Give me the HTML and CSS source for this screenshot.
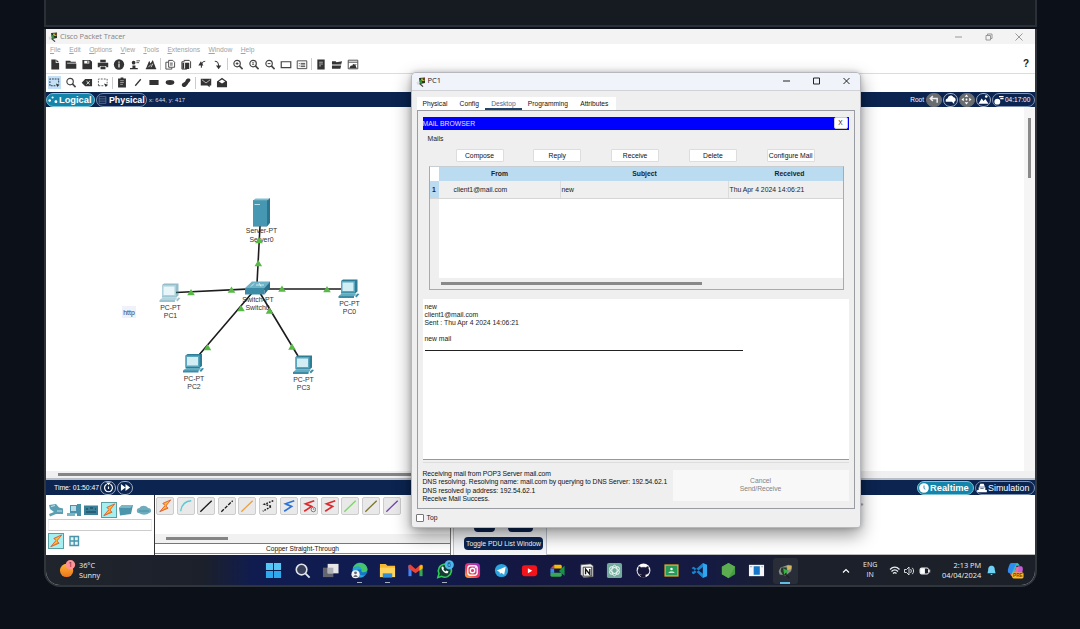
FILE: index.html
```html
<!DOCTYPE html>
<html lang="en">
<head>
<meta charset="utf-8">
<title>Cisco Packet Tracer</title>
<link rel="stylesheet" href="styles.css">
</head>
<body>
<svg class="defs" width="0" height="0">
  <defs>
    <symbol id="app" viewBox="0 0 10 10"><path d="M3 1l6-.6V6L4 7z" fill="#23391f"/><path d="M5 1.5h3.5v2.5H5z" fill="#b8a83c"/><path d="M3.2 3h2.6l.4 3-2 1z" fill="#2f8f3a"/><path d="M.5 5.500l2-1.500.6 3.200-1.800.5z" fill="#d8dcd8"/><path d="M3.500 6.500l3.600 3.200" stroke="#444" stroke-width="1.100"/><path d="M7 1h1.800v2H7z" fill="#7d2f23"/></symbol>
    <symbol id="zoom" viewBox="0 0 12 12"><circle cx="5" cy="5" r="3.500" fill="none" stroke="#444" stroke-width="1.300"/><path d="M7.500 7.500l3.500 3.500" stroke="#444" stroke-width="1.700"/></symbol>
    <symbol id="pc" viewBox="0 0 22 20"><path d="M3 2l2-1.500h14.500v12L17 14.500H3z" fill="#2e7d97"/><path d="M3 2h14v11.500H3z" fill="#5ba6bd"/><path d="M4.500 3.500h11v8.500h-11z" fill="#d3edf4"/><path d="M1 16.500l3-2h14.500L16 17.500H1z" fill="#65abc0"/><path d="M.5 17h15.500v2H.5zM17 17l2.500-2.500 2 .5-3 3.500z" fill="#3d8ca5"/></symbol>
    <symbol id="bolt" viewBox="0 0 16 16"><path d="M14.500 1L5.500 5l2.500 2.500-6 7L11.500 10.500 9 8z" fill="#f79a1e" stroke="#d8502b" stroke-width=".9"/><path d="M13 2.500L7 5.500 9.500 7.500 4 12.500l6-3-2-1.700z" fill="#ffc33d"/></symbol>
    <symbol id="zig" viewBox="0 0 16 16"><path d="M14 2L4 5.500 11 8.500 2.500 14M4.500 6l6.500 2.500" fill="none" stroke="currentColor" stroke-width="1.900"/></symbol>
  </defs>
</svg>

<div class="card-above"></div>
<main class="shot">
  <header class="titlebar">
    <svg class="app-ico"><use href="#app"/></svg><span class="app-title">Cisco Packet Tracer</span>
    <svg class="winctl" viewBox="0 0 74 12" fill="none" stroke="#8f8f8f" stroke-width=".9"><path d="M1 6h7M32 4.500h4.500v4.500H32zM33.500 4V3h4.500v4.500h-1M61.500 2.500l7 7M68.500 2.500l-7 7"/></svg>
  </header>
  <nav class="menu"><span><u>F</u>ile</span><span><u>E</u>dit</span><span><u>O</u>ptions</span><span><u>V</u>iew</span><span><u>T</u>ools</span><span><u>E</u>xtensions</span><span><u>W</u>indow</span><span><u>H</u>elp</span></nav>

  <div class="tools first">
    <svg viewBox="0 0 12 12"><path d="M2 .5h4.800v3.800H10.500V11.500H2zM7.500.5l3 3.100h-3z"/></svg>
    <svg viewBox="0 0 12 12"><path d="M.2 1.800h4.800l1 1.200h5.300V4H1.800v1h10v5.700H.2z"/></svg>
    <svg viewBox="0 0 12 12"><path fill-rule="evenodd" d="M1 1h8.500l2 2v8.300H1zM3 2v3h5.500V2zM6.500 2.300h1v2h-1z"/></svg>
    <svg viewBox="0 0 12 12"><path d="M3 .8h6v2.700H3zM.3 4h11.400v5H9.500V7.500h-7V9H.3zM3.300 8.300h5.400V11.300H3.300z"/></svg>
    <svg viewBox="0 0 12 12"><circle cx="6" cy="6" r="5.600"/><path d="M6 5v4.200M6 2.800v1.300" stroke="#fff" stroke-width="1.300" fill="none"/></svg>
    <svg viewBox="0 0 12 12"><circle cx="4.500" cy="4" r="2"/><path d="M.5 11.300v-1.500h2.700V7h3.300v2.800H9v1.500z"/><path d="M7.500 2h4M7.500 4h3" stroke="#333" stroke-width=".9"/></svg>
    <svg viewBox="0 0 12 12"><path d="M.5 10.500L4 2l1.500 3L8 1l3.500 9.500zM.3 10h11.400v1.300H.3z"/><path d="M3 9l3-3M6 9l2-4" stroke="#fff" stroke-width=".8"/></svg>
    <i></i>
    <svg viewBox="0 0 12 12"><path d="M4.500 1.500H9l2 2V9H4.500zM4 3.500H1.500V11H8V9.500M6 4.500h3M6 6.500h3" fill="none" stroke="#444"/></svg>
    <svg viewBox="0 0 12 12"><path d="M3.500 1.500H9.500l1.500 1.500V10M4.500 3H1.500v8H7" fill="none" stroke="#333"/><path d="M5 4h4.500v7H5zM2 4h2v6.500H2z"/></svg>
    <svg viewBox="0 0 12 12"><path d="M9.500 2.500C6.500 2.500 5.300 4.500 5.300 9.500" fill="none" stroke="#444" stroke-width="1.200"/><path d="M2.500 6.500h5.500L5.300 2z" transform="translate(-.5 .5)"/></svg>
    <svg viewBox="0 0 12 12"><path d="M2.500 2.500C5.500 2.500 6.700 4 6.700 8" fill="none" stroke="#444" stroke-width="1.200"/><path d="M3.800 7h5.800L6.700 11.300z"/></svg>
    <i></i>
    <svg viewBox="0 0 12 12"><use href="#zoom"/><path d="M3.500 5h3M5 3.500v3" stroke="#333"/></svg>
    <svg viewBox="0 0 12 12"><use href="#zoom"/><path d="M3.800 4h2.400M3.800 6h2.400M5 3.500v3" stroke="#666" stroke-width=".8"/></svg>
    <svg viewBox="0 0 12 12"><use href="#zoom"/><path d="M3.500 5h3" stroke="#333"/></svg>
    <svg viewBox="0 0 12 12"><path d="M.8 3h10.400v6.500H.8z" fill="none" stroke="#444" stroke-width="1.300"/></svg>
    <svg viewBox="0 0 12 12"><path d="M.8 2h10.400v8.500H.8zM2.500 5h1M2.500 7.500h1M4.500 4.800h5M4.500 6.500h5M4.500 8.300h5" fill="none" stroke="#444"/></svg>
    <i></i>
    <svg viewBox="0 0 12 12"><path d="M2 .5h8v11H2z"/><path d="M4 3.500h4M4 5.500h4M4 7.500h2" stroke="#bbb"/></svg>
    <svg viewBox="0 0 12 12"><path d="M.5 2.500h4l1 1 6-1-1 3.500H.5zM.5 7h10l-.8 3.500H.5z"/><path d="M1 6.500l9-.8" stroke="#999" stroke-width=".8"/></svg>
    <svg viewBox="0 0 12 12"><path d="M.8 1.300h10.400v9.400H.8zM1 3.500h10" fill="none" stroke="#444"/><path d="M2 10c1-3 2-3.500 3-2.500 1-3 3-3.500 5 2.500z"/><path d="M7.500 8l2-2.500" stroke="#444"/></svg>
    <b class="help">?</b>
  </div>
  <div class="tools second">
    <svg class="on" viewBox="0 0 12 12"><path d="M1 3v-.8h9.500V7M1 4.500v5h6.500" fill="none" stroke="#345" stroke-width="1.200" stroke-dasharray="2 1"/><path d="M7.500 7l4 1.500L9 11z"/></svg>
    <svg viewBox="0 0 12 12"><use href="#zoom"/></svg>
    <svg viewBox="0 0 12 12"><path d="M.2 6.200L4 2.200h7.500v8H4z"/><path d="M5.500 4.500l3.500 3.500M9 4.500L5.500 8" stroke="#fff"/></svg>
    <svg viewBox="0 0 12 12"><path d="M1 9.500V2.200h9.500V7M1 9.500h6" fill="none" stroke="#555" stroke-dasharray="2 1.300"/><path d="M7 7l4.500 1.500L9 11z"/></svg>
    <i></i>
    <svg viewBox="0 0 12 12"><path d="M2 1.500h2.500V.5h3v1H10.300v10H1.700v-10z"/><path d="M4 4h4M4 6h4M4 8h3" stroke="#aaa" stroke-width=".9"/></svg>
    <svg viewBox="0 0 12 12"><path d="M3 9.500L9 2.500" stroke="#333" stroke-width="1.400"/></svg>
    <svg viewBox="0 0 12 12"><path d="M1 3.300h10v5.400H1z"/></svg>
    <svg viewBox="0 0 12 12"><ellipse cx="6" cy="6" rx="4.700" ry="2.600"/></svg>
    <svg viewBox="0 0 12 12"><path d="M6 3c1-2 4.500-2 4.800 0S9 5.500 8 7.500 4.500 12 2.500 10.500 1.500 7 3.500 6 5 5 6 3z"/></svg>
    <i></i>
    <svg viewBox="0 0 12 12"><path d="M.3 1.800h11.400v7.500H10v2L7.500 9.300H.3z"/><path d="M1.500 3L6 6.500 10.500 3" stroke="#ccc" fill="none" stroke-width=".9"/></svg>
    <svg viewBox="0 0 12 12"><path d="M.5 5L6 .8 11.500 5v6.300H.5z"/><path d="M2.500 5L6 2.800 9.500 5 6 7.200z" fill="#fff"/></svg>
  </div>

  <div class="navy">
    <span class="pill logical on"><svg viewBox="0 0 12 12"><circle cx="2" cy="6.500" r="1.500"/><circle cx="5.500" cy="3" r="1.300"/><circle cx="9.500" cy="8" r="1.700"/></svg>Logical</span>
    <span class="pill physical"><svg viewBox="0 0 12 12"><path d="M1.500 1.500h9v9h-9zM1.500 4.500h9M1.500 7.500h9" fill="none" stroke="#74849f" stroke-width=".9"/></svg>Physical</span>
    <span class="xy">x: 644, y: 417</span>
    <span class="root">Root</span>
    <span class="round grey"><svg viewBox="0 0 12 12"><path d="M10 9.500V5H3M5.300 2.300L2.500 5l2.800 2.700" fill="none" stroke="#eee" stroke-width="1.600"/></svg></span>
    <span class="round"><svg viewBox="0 0 12 12"><path d="M1 8.500C0 5.500 2 5 3 4.500 3.500 1 8 .5 9.300 3.500c3 .5 3 4.500.7 5v2.500L7.500 8.500z"/></svg></span>
    <span class="round grey"><svg viewBox="0 0 12 12"><path d="M6 .5l2 2.500H4zM6 11.500l2-2.500H4zM.5 6L3 4v4zM11.500 6L9 4v4z"/><circle cx="6" cy="6" r="1"/></svg></span>
    <span class="round"><svg viewBox="0 0 12 12"><path d="M.5 10.500l3.500-5.500 2 2.500L8 5.500l3.500 5z"/><circle cx="9" cy="2.800" r="1.400"/></svg></span>
    <span class="pill clock"><svg viewBox="0 0 12 12"><circle cx="4" cy="8" r="3.500"/><path d="M6 2h5.500M7.500 4.300h4" stroke="#fff" stroke-width="1.400"/></svg>04:17:00</span>
  </div>

  <section class="canvas">
    <svg class="topology" viewBox="46 107 370 364" width="370" height="364">
      <path d="M122 306h14v12h-14z" fill="#f1f1fa"/>
      <g class="labels">
        <text x="129" y="314.500">http</text>
        <text x="261.500" y="233">Server-PT</text><text x="261.500" y="241.500">Server0</text>
        <text x="258" y="301.500">Switch-PT</text><text x="257.500" y="310">Switch0</text>
        <text x="170.500" y="310">PC-PT</text><text x="170.500" y="318">PC1</text>
        <text x="349.500" y="306">PC-PT</text><text x="349.500" y="314">PC0</text>
        <text x="194" y="380.500">PC-PT</text><text x="194" y="388.500">PC2</text>
        <text x="303.500" y="382">PC-PT</text><text x="303.500" y="390">PC3</text>
      </g>
      <g stroke="#1c1c1c" stroke-width="1.600"><path d="M260 226L257 284M176 292.500L258 288.500M256 289H342M252 293L199 355M260 293L298 356"/></g>
      <path d="M253 200h14l3-2v25l-3 3.500h-14z" fill="#2c7590"/><path d="M253 200.500h14V226h-14z" fill="#4597b2"/><path d="M253 200.500l2.500-2H270l-3 2z" fill="#7dbdcf"/><path d="M254.500 204.500h5.500" stroke="#b9e0ea"/>
      <path d="M245 288l7-6.500h18l-5.500 7z" fill="#6db2c6"/><path d="M245 288h19.500v6.500H245z" fill="#3b8ba6"/><path d="M264.500 288l5.500-6.500v6l-5.500 7z" fill="#2a718b"/><path d="M251 286.500l3-3M256 285h8M259 283l2 3.500" stroke="#d9f0f5" stroke-width=".9"/>
      <use href="#pc" x="159" y="283" width="22" height="20" opacity=".5"/>
      <use href="#pc" x="338" y="279" width="22" height="20"/>
      <use href="#pc" x="182.500" y="353.500" width="22" height="20"/>
      <use href="#pc" x="292.500" y="355" width="22" height="20"/>
      <path fill="#58b947" d="M259 237l3.800 6.200h-7.600zM258.300 260l3.800 6.200h-7.600zM191 289l3.800 6.200h-7.600zM231.500 286.500l3.800 6.200h-7.600zM282 285.500l3.800 6.200h-7.600zM327 286l3.800 6.200h-7.600zM241 305l3.800 6.200h-7.600zM269.500 307.500l3.800 6.200h-7.600zM207.500 344l3.800 6.200h-7.600zM292 343.500l3.800 6.200h-7.600z"/>
    </svg>
    <div class="vscroll"><i></i></div>
  </section>
  <div class="hscroll"><i></i></div>

  <div class="navy lower">
    <span class="time">Time: 01:50:47</span>
    <span class="round"><svg viewBox="0 0 12 12"><path d="M4 2.500a4.300 4.300 0 1 0 4 0M6 5v2.500" fill="none" stroke="#fff" stroke-width="1.300"/><path d="M3.500.5h5L6 3.500z"/></svg></span>
    <span class="round"><svg viewBox="0 0 12 12"><path d="M1 2.300L6 6 1 9.700zM6 2.300L11 6 6 9.700z"/></svg></span>
    <span class="pill realtime on"><svg viewBox="0 0 12 12"><circle cx="6" cy="6" r="5.800"/><path d="M6 3v3.500l1.500 1" stroke="#1384aa" fill="none"/></svg>Realtime</span>
    <span class="pill sim"><svg viewBox="0 0 12 12"><path d="M4 .8h4L9.500 4.500h-7zM2 5h8v3.500H2zM.2 8.500h11.600V11H.2z"/><path d="M4 6.500h4" stroke="#0b2450" stroke-width=".8"/></svg>Simulation</span>
  </div>

  <section class="bottom">
    <div class="kinds">
      <div class="krow">
        <svg viewBox="0 0 16 16"><path d="M1 3l7-1 3 3.500 4 1V12H8l-6 2.500-1-2.500 5-2-4-3z" fill="#5b9fb3"/><path d="M3 4.500l4-1M9 9h5" stroke="#c5e3eb"/></svg>
        <svg viewBox="0 0 16 16"><path d="M4 3h8v8.500H4zM11 2h4v12h-4z" fill="#4b93aa"/><path d="M5 4h5v5H5z" fill="#b9dde7"/><path d="M1 11l8 0v3H1z" fill="#7ab5c6"/></svg>
        <svg viewBox="0 0 16 16"><path d="M1 3.500h14v9.500H1z" fill="#3a8099"/><path d="M3 7h2M7 6h3M12 7h1M3 10h10" stroke="#163f50"/></svg>
        <span class="tile"><svg><use href="#bolt"/></svg></span>
        <svg viewBox="0 0 16 16"><path d="M1 6l3-3h11l-2 9-11 1.500z" fill="#4b94aa"/><path d="M4 3h11l-2.500 3H1z" fill="#79b7c8"/></svg>
        <svg viewBox="0 0 16 16"><path d="M3 11C0 11 0 6 3.500 6 5 3 10 3 12 6c4 0 4 5 1 5-2 2-7 2.500-10 0z" fill="#6eabbd"/><path d="M3 9h10" stroke="#478da3"/></svg>
      </div>
      <div class="slot"></div>
      <div class="krow"><span class="tile"><svg><use href="#bolt"/></svg></span>
        <svg viewBox="0 0 16 16"><path d="M4 3.500h8.500v9H4zM8.200 3.500v9M4 8h8.500" fill="#e4f5fa" stroke="#4b94aa" stroke-width="1.400"/></svg></div>
    </div>
    <div class="cables">
      <div class="cabletiles">
        <svg viewBox="0 0 16 16"><use href="#bolt"/></svg>
        <svg viewBox="0 0 16 16"><path d="M2 14C3 6 7 2.500 14 2" fill="none" stroke="#57cbd5" stroke-width="1.500"/></svg>
        <svg viewBox="0 0 16 16"><path d="M1.500 14.500L14.500 2" stroke="#161616" stroke-width="1.500"/></svg>
        <svg viewBox="0 0 16 16"><path d="M1.500 14.500L14.500 2" stroke="#161616" stroke-width="1.500" stroke-dasharray="4 1.500"/></svg>
        <svg viewBox="0 0 16 16"><path d="M1.500 14.500L14.500 2" stroke="#eea03b" stroke-width="1.500"/></svg>
        <svg viewBox="0 0 16 16"><path d="M14 2L4 6l8 2.500L2 14" fill="none" stroke="#161616" stroke-width="1.600" stroke-dasharray="2 1.300"/></svg>
        <svg viewBox="0 0 16 16" color="#2f72d8"><use href="#zig"/></svg>
        <svg viewBox="0 0 16 16" color="#dd2a2e"><use href="#zig"/><circle cx="13" cy="12" r="2.600" fill="#eee" stroke="#555" stroke-width=".8"/><path d="M13 10.500V12h1" stroke="#555" fill="none" stroke-width=".7"/></svg>
        <svg viewBox="0 0 16 16" color="#dd2a2e"><use href="#zig"/></svg>
        <svg viewBox="0 0 16 16"><path d="M1.500 14.500L14.500 2" stroke="#74dc5c" stroke-width="1.500"/></svg>
        <svg viewBox="0 0 16 16"><path d="M1.500 14.500L14.500 2" stroke="#7d7428" stroke-width="1.500"/></svg>
        <svg viewBox="0 0 16 16"><path d="M1.500 14.500L14.500 2" stroke="#7044ad" stroke-width="1.500"/></svg>
      </div>
      <div class="cscroll"><i></i></div>
      <div class="cname">Copper Straight-Through</div>
    </div>
    <div class="pdu">
      <div class="pdu-top"><span>New</span><span>Delete</span></div>
      <span class="toggle">Toggle PDU List Window</span>
    </div>
    <div class="events">e</div>
  </section>

  <footer class="taskbar">
    <div class="weather">
      <svg viewBox="0 0 20 20"><defs><linearGradient id="sun" x2="0" y2="1"><stop stop-color="#ffb52e"/><stop offset="1" stop-color="#ee7420"/></linearGradient></defs><circle cx="8" cy="11" r="7" fill="url(#sun)"/><circle cx="12" cy="5" r="5" fill="#ff9296"/><text x="12" y="7.800" class="badge">1</text></svg>
      <div><p>36°C</p><p>Sunny</p></div>
    </div>
    <div class="apps">
      <svg viewBox="0 0 18 18"><g fill="#54c5f5"><path d="M1 1h7.500v7.500H1zM9.500 1H17v7.500H9.500z"/><path d="M1 9.500h7.500V17H1zM9.500 9.500H17V17H9.500z" fill="#2fa9ee"/></g></svg>
      <svg viewBox="0 0 18 18"><circle cx="8" cy="8" r="5.600" fill="#39405a" stroke="#e3e5ec" stroke-width="1.700"/><path d="M12 12l4.500 4.500" stroke="#e3e5ec" stroke-width="2"/></svg>
      <svg viewBox="0 0 18 18"><path d="M1 6h11v10H1z" fill="#63666f"/><path d="M6 2h11.500v10H6z" fill="#e6e6e6"/><path d="M6 6h6v6H6z" fill="#adafb4"/></svg>
      <svg class="run" viewBox="0 0 18 18"><circle cx="9.500" cy="8.500" r="8" fill="#1677c9"/><path d="M2 7C4-1 16-1 17.500 7.500c0 4-5 4-6.500 2.500C12 6 7 3 2 7z" fill="#46c66b"/><path d="M2 7c5-4 9-2 9 1H7c-1 4 3 7 8 6-5 5-14 2-13-7z" fill="#25a6dd"/><circle cx="4.800" cy="13" r="4.300" fill="#f2f3f5"/><circle cx="4.800" cy="11.500" r="1.500" fill="#667"/><path d="M2.500 16c.5-3 4-3 4.600 0z" fill="#667"/></svg>
      <svg class="run" viewBox="0 0 18 18"><path d="M1 2h6l2 2h8v12H1z" fill="#f4b92e"/><path d="M1 6h16v10H1z" fill="#ffd45e"/><path d="M4 12h10v4.500H4z" fill="#2d8edb"/></svg>
      <svg viewBox="0 0 18 18"><path d="M1.500 4h3.300v11H1.500z" fill="#4285f4"/><path d="M13.200 4h3.300v11h-3.300z" fill="#34a853"/><path d="M1.500 3.500l2-.8L9 7.500l5.500-4.800 2 .8v3L9 12 1.500 6.500z" fill="#ea4335"/><path d="M13.200 4.200l2.300-1.200 1 .8v3l-3.300 2.500z" fill="#fbbc04"/></svg>
      <svg class="run" viewBox="0 0 18 18"><path d="M2 16.500l1.200-4.300A6.900 6.900 0 1 1 6 15.200z" fill="#153c30" stroke="#30c95b" stroke-width="1.700"/><path d="M6 5c-1 3 3 7.500 6.300 7l1-2-2.300-1-1 1C8.500 9.200 8 8 7.800 7.500l.7-1L7.500 4.700z" fill="#fff"/><circle cx="14" cy="3" r="4.900" fill="#4cb9e8"/><text x="14" y="5.600" class="badge dark">6</text></svg>
      <svg viewBox="0 0 18 18"><defs><linearGradient id="ig" x1="0" y1="1" x2=".8" y2="0"><stop stop-color="#fdb83c"/><stop offset=".45" stop-color="#ed3659"/><stop offset="1" stop-color="#a334cb"/></linearGradient></defs><rect x="1" y="1" width="16" height="16" rx="4" fill="url(#ig)"/><rect x="4" y="4" width="10" height="10" rx="3" fill="none" stroke="#fff" stroke-width="1.400"/><circle cx="9" cy="9" r="2.400" fill="none" stroke="#fff" stroke-width="1.400"/><circle cx="12" cy="6" r=".7" fill="#fff"/></svg>
      <svg viewBox="0 0 18 18"><circle cx="9" cy="9" r="7" fill="#2ba3de"/><path d="M4 9l9.500-4-1.700 8.500-3-2.200-1.500 1.500-.3-2.300z" fill="#fff"/></svg>
      <svg viewBox="0 0 18 18"><rect x="1" y="3.500" width="16" height="11.500" rx="3" fill="#f3141b"/><path d="M7.300 6.500v5.500l4.600-2.700z" fill="#fff"/></svg>
      <svg viewBox="0 0 18 18"><path d="M1.500 7L5.500 3v4z" fill="#e94335"/><path d="M5.500 3H12q1.500 0 1.500 1.500V7h-8z" fill="#fbbc04"/><path d="M1.500 7h4v4.500h-4z" fill="#3c85f2"/><path d="M1.500 11.500h12V14q0 1.500-1.500 1.500H3q-1.500 0-1.500-1.500z" fill="#34a853"/><path d="M11 9l5.500-5v10.500L11 10z" fill="#159447"/></svg>
      <svg viewBox="0 0 18 18"><path d="M3 3l10-1 3 2v11.500L6 16.500 3 13z" fill="#f4f4f4" stroke="#555" stroke-width=".7"/><path d="M5.500 5.500h9v9.500h-9z" fill="#fff" stroke="#222" stroke-width=".9"/><path d="M8 13V7.500l4.500 5.500V7.500" fill="none" stroke="#111" stroke-width="1.400"/></svg>
      <svg viewBox="0 0 18 18"><rect x="1" y="1" width="16" height="16" rx="2" fill="#74aa9c"/><g fill="none" stroke="#e8f5f1" stroke-width="1"><ellipse cx="9" cy="9" rx="2.800" ry="5.600"/><ellipse cx="9" cy="9" rx="2.800" ry="5.600" transform="rotate(60 9 9)"/><ellipse cx="9" cy="9" rx="2.800" ry="5.600" transform="rotate(120 9 9)"/></g></svg>
      <svg viewBox="0 0 18 18"><circle cx="9" cy="9" r="7.300" fill="#fff"/><path d="M7 16.500v-2.800c-3 .4-3-1.500-4-1.900M7 13.500c-5-.5-4.500-5-3.200-6.300-.3-1-.1-2 .2-2.500 1 0 1.900.6 2.600 1.100 1.400-.4 3.400-.4 4.800 0 .7-.5 1.600-1.100 2.600-1.100.3.500.5 1.500.2 2.500 1.300 1.300 1.800 5.800-3.200 6.300v3H7z" fill="#18193a" stroke="#18193a" stroke-width=".3"/></svg>
      <svg viewBox="0 0 18 18"><path d="M1.500 2.500h15v13h-15z" fill="#d8a92a"/><path d="M3 4h12v10H3z" fill="#259b56"/><circle cx="9" cy="7.500" r="1.300" fill="#fff"/><path d="M5.500 11.500c1-2 6-2 7 0z" fill="#fff"/></svg>
      <svg viewBox="0 0 18 18"><path d="M12.500 1L17 3v12l-4.500 2z" fill="#2fa6ef"/><path d="M12.500 1L2 10.500l-1-1v2.300l1.800 1.300L13 5zM12.500 17L2 7 1 7.800V6l1.800-1L13 12.800z" fill="#1785cf"/></svg>
      <svg viewBox="0 0 18 18"><path d="M9 1l7 4v8l-7 4.200L2 13V5z" fill="#469b45"/><path d="M9 1l7 4-7 12-7-4V5z" fill="#5cac50"/></svg>
      <svg viewBox="0 0 18 18"><path d="M1 3h16v12H1z" fill="#f4f6f8"/><path d="M6 4.500h6.500v9H6z" fill="#1676c9"/><path d="M2 5h2.500M14 5h2" stroke="#789" stroke-width=".7"/></svg>
      <span class="active"><svg viewBox="0 0 18 18"><path d="M4 5l9-3 4 1-1 6-6 5-7-1-1-4z" fill="#8a918b"/><path d="M5 5h6v7l-4 2-3-5z" fill="#233b28"/><path d="M7 6l6 3-5 4z" fill="#34b43f"/><path d="M11 3h5v4l-4 1z" fill="#d2b65e"/><path d="M9 12l5 5" stroke="#222" stroke-width="1.500"/></svg></span>
    </div>
    <div class="tray">
      <svg class="chev" viewBox="0 0 10 10"><path d="M2 6.500l3-3 3 3" fill="none" stroke="#fff" stroke-width="1.200"/></svg>
      <div class="lang"><p>ENG</p><p>IN</p></div>
      <svg class="status" viewBox="0 0 42 12" fill="none" stroke="#e9ebef"><path d="M1 4.500c3-3 6.500-3 9.500 0M2.500 6.500c2-2 4.500-2 6.500 0M4 8.500c1-1 2.500-1 3.500 0" stroke-width="1.300"/><path d="M15.500 4.500h2l2.500-2.500v8l-2.500-2.500h-2zM21.500 4c1 1.200 1 2.800 0 4M23.300 2.800c1.700 2 1.700 4.400 0 6.400" stroke-width=".9"/><rect x="31" y="3" width="8.500" height="6" rx="1.500"/><path d="M31.500 3.500h4v5h-4z" fill="#fff"/><path d="M40.700 4.500v3"/></svg>
      <div class="date"><p>2:13 PM</p><p>04/04/2024</p></div>
      <svg class="bell" viewBox="0 0 10 12"><path d="M5 .8c3 0 3.700 2.500 3.700 5L9.500 9h-9l.8-3.200C1.300 3.300 2 .8 5 .8zM3.500 9.800h3L5 11.200z" fill="#6fd2f5"/></svg>
      <svg class="copilot" viewBox="0 0 18 18"><path d="M5 1h5L7.500 12H3.500C.5 12 .5 9 1.500 6S3 1 5 1z" fill="#2f8df0"/><path d="M10 1c3 0 3 3 4 3h-4L8 12H5z" fill="#36c3c0"/><path d="M12 4.500h3c2 0 2 3 1.500 5s-1 6-3.500 6H7l3-2z" fill="#c65ddb"/><path d="M3 12h4l3-7h3l-3 10.500H6c-2 0-2-2-3-3.500z" fill="#ee6b9f"/><rect x="5.500" y="11" width="12" height="6.500" rx="1.500" fill="#fcbc23"/><text x="11.500" y="16.200" class="pre">PRE</text></svg>
    </div>
  </footer>

  <section class="window">
    <header><svg class="app-ico"><use href="#app"/></svg><span>PC1</span>
      <svg class="ctl" viewBox="0 0 68 12" fill="none" stroke="#222" stroke-width="1"><path d="M1 6h7M31.500 3h6v6h-6zM61.500 3l6 6M67.500 3l-6 6"/></svg></header>
    <nav class="tabs"><span>Physical</span><span>Config</span><span class="sel">Desktop</span><span>Programming</span><span>Attributes</span></nav>
    <div class="frame">
      <div class="mailbar"><span>MAIL BROWSER</span><button>X</button></div>
      <section class="mails">
        <p class="legend">Mails</p>
        <div class="buttons"><span>Compose</span><span>Reply</span><span>Receive</span><span>Delete</span><span>Configure Mail</span></div>
        <div class="table">
          <div class="row head"><i></i><span>From</span><span>Subject</span><span>Received</span></div>
          <div class="row item"><i>1</i><span class="from">client1@mail.com</span><span>new</span><span>Thu Apr 4 2024 14:06:21</span></div>
          <div class="blank"></div>
          <div class="tscroll"><i></i></div>
        </div>
      </section>
      <div class="message"><p>new</p><p>client1@mail.com</p><p>Sent : Thu Apr 4 2024 14:06:21</p><p>&nbsp;</p><p>new mail</p><hr></div>
      <div class="log">
        <div><p>Receiving mail from POP3 Server mail.com</p><p>DNS resolving. Resolving name: mail.com by querying to DNS Server: 192.54.62.1</p><p>DNS resolved ip address: 192.54.62.1</p><p>Receive Mail Success.</p></div>
        <span class="cancel">Cancel<br>Send/Receive</span>
      </div>
    </div>
    <label class="top"><i></i>Top</label>
  </section>
</main>
</body>
</html>
```
FILE: styles.css
```css
* { box-sizing: border-box; }
body { margin: 0; width: 1080px; height: 629px; overflow: hidden; background: #0c1018; font: 6.8px/8px "Liberation Sans", Arial, sans-serif; color: #222; }
p { margin: 0; }
svg { display: block; flex: none; }
i { font-style: normal; }
.defs { position: absolute; }

.card-above { width: 993px; height: 27px; margin: 0 0 2px 44px; background: #161b22; border: 2px solid #2b3038; border-top: 0; }
.shot { position: relative; width: 993px; height: 558px; margin-left: 44px; border: 2px solid #30353c; border-top: 0; border-radius: 0 0 16px 16px; overflow: hidden; background: #fff; }

.titlebar { display: flex; align-items: center; height: 15px; padding-left: 2px; background: #f3f3f3; }
.app-ico { width: 10px; height: 10px; }
.app-title { margin-left: 2px; font: 7.5px/15px "Open Sans", sans-serif; color: #858585; letter-spacing: -.12px; }
.winctl { width: 74px; height: 12px; margin: 1px 7px 0 auto; }
.menu { display: flex; height: 11px; padding-left: 4px; gap: 8.4px; line-height: 12px; color: #a2a2a2; font-size: 6.7px; }
.menu u { text-decoration-thickness: .5px; }

.tools { display: flex; align-items: center; height: 19px; padding-left: .5px; fill: #333; }
.tools > svg { width: 16px; height: 11px; }
.tools > i { width: 3.5px; height: 12px; border-left: 1px solid #ccc; transform: translateX(1px); }
.first { border-bottom: 1px solid #dcdcdc; }
.second { height: 18px; padding: 0 0 1px .5px; }
.tools .on { width: 13px; height: 13px; margin: 0 1.5px; padding: 1px; background: #c4e0f6; }
.help { margin: 0 6px 0 auto; font: bold 10px/12px "Liberation Sans", sans-serif; }

.navy { display: flex; align-items: center; height: 15px; background: #0b2450; color: #fff; fill: #fff; }
.pill { display: flex; align-items: center; height: 14px; border: 1px solid #7e93b3; border-radius: 7px; font-weight: bold; font-size: 9.3px; line-height: 12px; white-space: nowrap; }
.pill svg { width: 10px; height: 10px; margin: 0 1px; }
.pill.on { background: #1384aa; border-color: #7dc4d8; }
.logical { width: 49px; }
.physical { width: 51px; margin-left: 1px; font-size: 8.8px; }
.physical svg { margin: 0 2px 0 1px; width: 9px; }
.xy { margin-left: 2px; font-size: 5.9px; color: #d5dce9; letter-spacing: .05px; }
.root { margin: 0 2px 0 auto; font-size: 6.5px; }
.round { display: grid; place-items: center; width: 15.5px; height: 14px; margin-right: 1px; border: 1px solid #a2afc2; border-radius: 8px; }
.round svg { width: 11px; height: 11px; }
.grey { background: #6a6d70; border-color: #6a6d70; }
.clock { width: 43px; font-weight: normal; font-size: 6.5px; }
.time { width: 54px; padding-left: 8px; font-size: 6.8px; white-space: nowrap; }
.lower .round { width: 16px; }
.realtime { width: 57px; margin-left: auto; }
.sim { width: 60px; margin-left: 1px; font-weight: normal; font-size: 8.9px; }

.canvas { display: flex; justify-content: space-between; height: 364px; }
.labels { font-size: 6.9px; fill: #333; text-anchor: middle; }
.vscroll { width: 11px; background: #f5f5f5; padding: 11px 0 0 4px; }
.vscroll i { display: block; width: 3px; height: 60px; background: #8a8a8a; }
.hscroll { height: 9px; padding: 2px 0 0 12px; background: #f0f0f0; border-bottom: 2px solid #b9bdc6; }
.hscroll i { display: block; width: 600px; height: 3px; background: #858585; }

.bottom { display: flex; height: 60px; }
.kinds { width: 108px; padding: 6px 2px 0; }
.krow { display: flex; align-items: center; gap: 1.5px; height: 17px; }
.krow > svg { width: 16px; height: 16px; }
.tile { width: 16px; height: 16px; border: 1px solid #5c9fa0; background: #a4eff2; }
.tile svg { width: 14px; height: 14px; }
.slot { height: 12px; margin-top: 1px; border: 1px solid #ccc; border-left-color: #eee; border-right-color: #eee; margin-bottom: 1px; }
.cables { width: 297px; border-left: 1px solid #333; border-right: 1px solid #777; margin-right: 2px; }
.cabletiles { display: flex; gap: 2.6px; height: 39px; padding: 2px 0 0 1px; }
.cabletiles svg { width: 18px; height: 18px; padding: 1px; border: 1px solid #ccc; border-radius: 2px; background: #e9e9e9; }
.cscroll { height: 10px; background: #f1f1f1; padding: 3px 0 0 11px; border-bottom: 1px solid #777; }
.cscroll i { display: block; width: 62px; height: 3px; background: #858585; }
.cname { height: 10px; border-bottom: 1px solid #888; text-align: center; line-height: 10px; font-size: 6.6px; color: #111; }
.pdu { width: 94px; padding: 29px 0 0 10px; border: 1px solid #bcc3cf; border-width: 0 1px; background: #f4f5f8; }
.pdu-top { display: flex; gap: 13px; padding-left: 10px; }
.pdu-top span { width: 21px; height: 8px; border-radius: 4px; background: #0b2450; color: #fff; font-size: 6px; line-height: 4px; text-align: center; }
.pdu-top span + span { width: 25px; }
.toggle { display: block; width: 79px; height: 13px; margin-top: 5px; border-radius: 4px; background: #0b2450; color: #fff; text-align: center; font-size: 6.8px; line-height: 13px; white-space: nowrap; }
.events { flex: 1; padding: 5px 0 0 313px; font-size: 6px; color: #777; border-bottom: 1px solid #bbb; }

.taskbar { display: flex; align-items: center; height: 31px; color: #eef0f4; font: 7.3px/10px "Open Sans", sans-serif; background: linear-gradient(90deg, #20242c 0, #1b202b 16%, #101c50 21%, #101b50 35%, #14173f 50%, #151a42 67%, #1b202b 76%, #1c2028); }
.weather { display: flex; width: 213.8px; padding: 0 0 2px 13px; gap: 1px; align-items: center; }
.weather svg { width: 19px; height: 19px; }
.badge { font: 8px "Open Sans", sans-serif; text-anchor: middle; fill: #67272f; }
.badge.dark { fill: #153d59; font-size: 7px; }
.apps { display: grid; grid-template-columns: repeat(19, 28.4px); justify-items: center; align-items: center; height: 31px; }
.apps svg { width: 17px; height: 17px; overflow: visible; }
.apps .run { height: 25px; padding: 4px 0; background: linear-gradient(#a8afbf, #a8afbf) center bottom / 5px 1.5px no-repeat; }
.active { display: grid; place-items: center; width: 25px; height: 26px; border-radius: 3px; background: linear-gradient(#62bce3, #62bce3) center 24px / 10px 2px no-repeat, #292d38; }
.active svg { width: 16px; height: 16px; }
.tray { display: flex; align-items: center; flex: 1; }
.chev { width: 10px; height: 10px; margin-left: 41.5px; }
.lang { width: 20px; margin-left: 9.5px; padding-bottom: 1px; text-align: center; font-size: 7px; }
.status { width: 42px; height: 12px; margin-left: 9px; }
.date { width: 45px; margin-left: 5px; padding-bottom: 2px; display: flex; flex-direction: column; align-items: flex-end; white-space: nowrap; font-size: 7.4px; }
.bell { width: 9px; height: 11px; margin-left: 5.5px; }
.copilot { width: 17px; height: 17px; margin-left: 11px; }
.pre { font: bold 5px "Liberation Sans", sans-serif; fill: #7a3f00; text-anchor: middle; }

/* PC1 floats over the main window */
.window { position: absolute; left: 364.5px; top: 43px; width: 450px; height: 456px; border: 1px solid #b6b8bd; border-radius: 5px 5px 3px 3px; background: #efefef; box-shadow: 0 7px 18px rgba(0,0,0,.42), 0 0 5px rgba(0,0,0,.2); }
.window header { display: flex; align-items: center; height: 18px; padding-left: 4px; border-bottom: 1px solid #d0d2d8; border-radius: 4px 4px 0 0; background: #f1f3fa; font: 7.5px/15px "Open Sans", sans-serif; }
.window header span { margin: -2px 0 0 2px; }
.ctl { width: 68px; height: 12px; margin: -2px 10px 0 auto; }
.tabs { display: flex; width: 199px; height: 13px; margin: 6px 0 0 5px; padding-left: 6px; gap: 12.2px; background: #fff; line-height: 13px; font-size: 6.7px; white-space: nowrap; color: #111; }
.tabs .sel { height: 13px; margin: 0 -6px; padding: 0 6px; border-bottom: 2px solid #1f4469; color: #3c6b91; }
.frame { width: 438px; height: 399px; margin-left: 5px; padding: 6px 5px 0 5px; border: 1px solid #999ca1; }
.mailbar { display: flex; justify-content: space-between; height: 13px; padding-right: 1px; background: #0000fe; color: #e4e4ff; line-height: 13px; font-size: 6.8px; }
.mailbar button { width: 14px; height: 12px; margin: 0; padding: 0; border: 1px solid #ccc; border-radius: 2px; background: #fff; font: 6.5px/10px "Liberation Sans", sans-serif; color: #222; }
.mails { height: 158px; margin: 5px 0 0; padding: 0 5px 0 6px; }
.legend { height: 14px; margin-left: -1px; line-height: 7px; }
.buttons { display: grid; grid-template-columns: repeat(5, 77.8px); height: 17px; padding-left: 27px; color: #111; }
.buttons span { width: 48px; height: 13px; border: 1px solid #ddd; border-radius: 1px; background: #fff; line-height: 11px; white-space: nowrap; display: flex; justify-content: center; }
.table { width: 415px; height: 124px; overflow: hidden; border: 1px solid #a7aaae; border-top-color: #c8cdd2; }
.row { display: grid; grid-template-columns: 9px 122px 168px 122px; height: 14px; line-height: 14px; }
.head { background: #bbdbf1; text-align: center; font-weight: bold; }
.head i { background: #fff; }
.item { height: 18px; line-height: 17px; background: #efefef; border-bottom: 1px solid #d6d6d6; }
.item i { background: #bbdbf1; text-align: center; font-weight: bold; }
.item span { padding-left: 1px; border-right: 1px solid #dcdcdc; white-space: nowrap; }
.item .from { padding-left: 15px; }
.blank { height: 79px; margin-left: 9px; background: #fff; }
.tscroll { height: 12px; padding: 4px 0 0 11px; background: #efefef; }
.tscroll i { display: block; width: 261px; height: 3px; background: #898989; }
.message { height: 161px; margin-top: 6px; padding: 3.5px 2px 0; background: #fff; border-bottom: 1px solid #999; line-height: 8.15px; }
.message hr { width: 318px; height: 1px; margin: 7px 0 0; border: 0; background: #222; }
.log { display: flex; justify-content: space-between; height: 42px; margin-top: 2px; padding-top: 7px; line-height: 8.3px; letter-spacing: -.06px; border-top: 1px solid #ddd; white-space: nowrap; color: #111; }
.cancel { width: 176px; height: 31px; padding-top: 7px; background: #f8f8f8; text-align: center; color: #858585; }
.top { display: flex; align-items: center; gap: 2.5px; height: 17px; padding-left: 4.5px; }
.top i { width: 8px; height: 8px; border: 1px solid #777; border-radius: 1px; background: #fff; }
```
